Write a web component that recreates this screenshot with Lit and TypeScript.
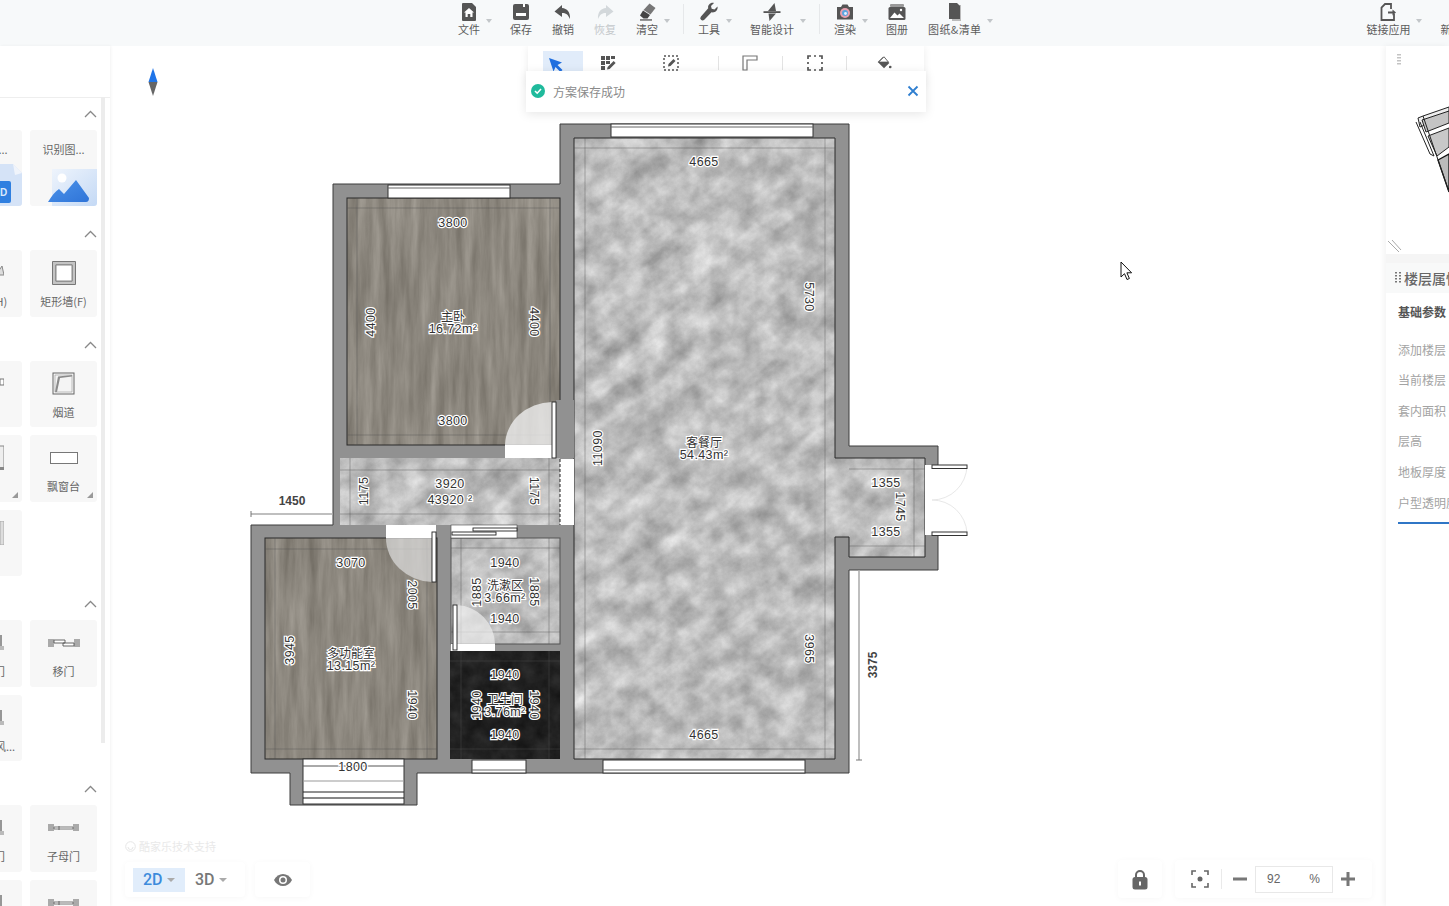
import { LitElement, html, css, svg } from "lit";
import { customElement } from "lit/decorators.js";

const I = {
  file: svg`<path d="M3 2a1 1 0 0 1 1-1h9l4 4v13a1 1 0 0 1-1 1H4a1 1 0 0 1-1-1z" fill="#555"/><path d="M10 6l5 4.500h-1.500V15h-2.200v-3H8.700v3H6.500v-4.500H5z" fill="#fff"/>`,
  save: svg`<rect x="2" y="2" width="16" height="16" rx="2" fill="#555"/><rect x="5" y="11" width="10" height="3" fill="#fff"/><rect x="12" y="2" width="2" height="3" fill="#fff"/>`,
  undo: svg`<path d="M9 3L1.500 9.500 9 15v-4c4 0 6 1.500 8 6 .5-7-3-10.500-8-11z" fill="#555"/>`,
  redo: svg`<path d="M11 3l7.500 6.500L11 15v-4c-4 0-6 1.500-8 6-.5-7 3-10.500 8-11z" fill="#d3d8db"/>`,
  clear: svg`<path d="M12.500 1.500l6 4.500-5 6.500-7-4.500z" fill="#777"/><path d="M6 8.500l7 4.500-2.500 3.500H6.500L3 13.500z" fill="#444"/><rect x="3" y="17.300" width="12" height="1.300" fill="#555"/>`,
  tool: svg`<path d="M18.500 4.500l-3 3-2.800-.7-.7-2.800 3-3c-3.500-.8-6.500 2-5.800 5.300L2 14.500a2.300 2.300 0 0 0 3.300 3.300l7.200-7.500c3.500.8 6.800-2.300 6-5.800z" fill="#555"/>`,
  ai: svg`<path d="M12.500 1L6 9h8zM7.500 19L14 11.500H6.500z" fill="#555"/><rect x="1.500" y="9.200" width="17" height="1.800" fill="#555"/>`,
  render: svg`<path d="M2 5h4l1.500-2.500h5L14 5h4v12.500H2z" fill="#555"/><circle cx="10" cy="11" r="5" fill="#e8a0b0"/><circle cx="10" cy="11" r="3" fill="#5ba5e0"/><circle cx="10.500" cy="11.500" r="1.400" fill="#e8efff"/>`,
  album: svg`<rect x="3" y="2" width="14" height="3" rx="1" fill="#999"/><rect x="1.500" y="5" width="17" height="13" rx="1.500" fill="#555"/><path d="M3 16l4.500-5.500 3 3 2-2L17 16z" fill="#fff"/><circle cx="14" cy="8" r="1.200" fill="#fff"/>`,
  docs: svg`<path d="M7 3h9v16H7z" fill="#bbb"/><path d="M4 1h8l3 3v13H4z" fill="#555"/>`,
  link: svg`<path d="M13 7V2H7L3.500 5.500V18H16v-6" fill="none" stroke="#555" stroke-width="1.800"/><path d="M10 9.500h4.500V7.500l3.500 3-3.500 3v-2H10z" fill="#555"/>`,
};

const topItems = [
  { t: "文件", i: I.file, a: 1 }, { t: "保存", i: I.save }, { t: "撤销", i: I.undo }, { t: "恢复", i: I.redo, off: 1 },
  { t: "清空", i: I.clear, a: 1 }, { d: 1 }, { t: "工具", i: I.tool, a: 1 }, { t: "智能设计", i: I.ai, a: 1 }, { d: 1 },
  { t: "渲染", i: I.render, a: 1 }, { t: "图册", i: I.album }, { t: "图纸&清单", i: I.docs, a: 1 },
];

const wall = svg`<path d="M.5.5h23v23H.5zM4 4v16h16V4z" fill="#c4c4c4" fill-rule="evenodd" stroke="#777"/><rect x="4" y="4" width="16" height="16" fill="#fff" stroke="#888"/>`;
const flue = svg`<rect x="1" y="1" width="21" height="21" fill="#f4f4f4" stroke="#666"/><path d="M3 20L6 4.500 20 3v1.500L8 6 5 20z" fill="#8a8a8a"/><path d="M3 3h17v17H3z" fill="none" stroke="#999" stroke-width=".6"/>`;
const bay = svg`<rect x="0.500" y="0.500" width="27" height="11" fill="#fff" stroke="#777"/>`;
const slide = svg`<rect x="0" y="0" width="6" height="8" fill="#aaa"/><rect x="26" y="0" width="6" height="8" fill="#aaa"/><path d="M6 1h11v3H6zM15 4h11v3H15z" fill="#fff" stroke="#555" stroke-width=".9"/>`;
const motherDoor = svg`<rect x="0" y="0" width="6" height="7" fill="#aaa"/><rect x="25" y="0" width="6" height="7" fill="#aaa"/><path d="M6 3h19v2H6z" fill="#fff" stroke="#666" stroke-width=".9"/><path d="M11 2v4" stroke="#666"/>`;
const cutA = svg`<path d="M22 14l6-9 2 9z" fill="#ddd" stroke="#888"/>`;
const cutB = svg`<rect x="26" y="7" width="4" height="6" fill="#fff" stroke="#777"/>`;
const cutC = svg`<rect x="24" y="1" width="6" height="22" fill="#eee" stroke="#888"/><rect x="26" y="22" width="4" height="3" fill="#888"/>`;
const cutD = svg`<rect x="26" y="0" width="4" height="24" fill="#ddd" stroke="#aaa"/>`;
const cutE = svg`<path d="M27 4v14h5" fill="none" stroke="#777" stroke-width="1.500"/><rect x="26" y="15" width="6" height="4" fill="#bbb"/>`;

type Card = { t?: string; ic?: any; w?: number; h?: number; c?: number };
const sections: { cls?: string; cards: Card[] }[] = [
  { cls: "top", cards: [{ t: "识别C..." }, { t: "识别图..." }] },
  { cards: [{ t: "直墙(H)", ic: cutA, w: 30, h: 24 }, { t: "矩形墙(F)", ic: wall, w: 24, h: 24 }] },
  { cards: [
    { t: "柱子", ic: cutB, w: 30, h: 24 }, { t: "烟道", ic: flue, w: 23, h: 23 },
    { t: "梁", ic: cutC, c: 1, w: 30, h: 26 }, { t: "飘窗台", ic: bay, w: 28, h: 12, c: 1 },
    { t: "地台", ic: cutD, w: 30, h: 24 },
  ] },
  { cards: [
    { t: "单开门", ic: cutE, w: 30, h: 24 }, { t: "移门", ic: slide, w: 32, h: 8 },
    { t: "排烟通风...", ic: cutE, w: 30, h: 24 },
  ] },
  { cards: [
    { t: "双开门", ic: cutE, w: 30, h: 24 }, { t: "子母门", ic: motherDoor, w: 31, h: 8 },
    { t: "门洞", ic: cutE, w: 30, h: 24 }, { t: "推拉门", ic: motherDoor, w: 31, h: 8 },
  ] },
];

type D = [string, number, number, number?];
const dims: D[] = [
  ["4665", 704, 162], ["5730", 809, 297, 90], ["11090", 598, 448, -90], ["3965", 809, 649, 90], ["4665", 704, 735],
  ["3800", 453, 223], ["3800", 453, 421], ["4400", 371, 322, -90], ["4400", 534, 322, 90],
  ["1175", 364, 491, -90], ["1175", 534, 491, 90], ["3920", 450, 484], ["43920 ²", 450, 500],
  ["3070", 351, 563], ["2005", 412, 595, 90], ["3945", 290, 650, -90], ["1940", 412, 705, 90],
  ["1940", 505, 563], ["1885", 477, 592, -90], ["1885", 534, 592, 90], ["1940", 505, 619],
  ["1940", 505, 675], ["1940", 477, 705, -90], ["1940", 534, 705, 90], ["1940", 505, 735],
  ["1800", 353, 767], ["1355", 886, 483], ["1745", 900, 507, 90], ["1355", 886, 532],
  ["54.43m²", 704, 455], ["16.72m²", 453, 329], ["13.15m²", 351, 666], ["3.66m²", 505, 598], ["3.76m²", 505, 712],
];
const labels: [string, number, number][] = [
  ["客餐厅", 704, 441], ["主卧", 453, 315], ["多功能室", 351, 652], ["洗漱区", 505, 584], ["卫生间", 505, 698],
];
const lines: number[][] = [
  [574, 148, 835, 148], [574, 749, 835, 749], [585, 138, 585, 759], [825, 138, 825, 759],
  [357, 198, 357, 445], [550, 198, 550, 445], [347, 208, 560, 208], [347, 435, 560, 435],
  [340, 470, 560, 470], [340, 514, 560, 514], [350, 458, 350, 525], [549, 458, 549, 525],
  [265, 549, 437, 549], [275, 538, 275, 759], [427, 538, 427, 759], [265, 749, 437, 749],
  [451, 548, 560, 548], [451, 632, 560, 632], [461, 538, 461, 644], [549, 538, 549, 644],
  [450, 661, 560, 661], [450, 749, 560, 749], [461, 651, 461, 759], [549, 651, 549, 759],
  [849, 469, 925, 469], [849, 546, 925, 546], [914, 458, 914, 557],
];

@customElement("app-root")
export class AppRoot extends LitElement {
  static styles = css`
    :host { display: block; width: 1449px; height: 906px; overflow: hidden; background: #fff; color: #666;
      font-family: "Noto Sans CJK SC", "Liberation Sans", sans-serif; font-size: 11px; }
    .page { display: flex; flex-direction: column; height: 906px; }
    .topbar { flex: none; height: 46px; display: flex; padding-left: 458px; background: #f7f9fa; overflow: hidden; }
    .tb { flex: none; position: relative; display: flex; flex-direction: column; align-items: center; padding-top: 2px; margin-right: 20px; line-height: 14px; color: #5c5c5c; }
    .tb svg { display: block; width: 20px; height: 20px; }
    .tb.off { color: #c4c8cb; }
    .tb.a { margin-right: 30px; }
    .tb.a::after { content: ""; position: absolute; right: -12px; top: 19px; border: 3px solid transparent; border-top: 4px solid #c2c6c9; }
    .tdiv { flex: none; width: 1px; height: 30px; margin: 4px 14px 0 -5px; background: #e6e8ea; }
    .tb.wide { letter-spacing: .4px; }
    .tb.far { margin-left: 355px; }
    .body { flex: 1; display: flex; min-height: 0; }
    .left { flex: none; width: 110px; background: #fff; box-shadow: 1px 0 3px rgba(0, 0, 0, .05); position: relative; overflow: hidden; z-index: 2; }
    .lhead { height: 51px; border-bottom: 1px solid #eee; }
    .sb { position: absolute; left: 101px; top: 51px; width: 4px; height: 646px; background: #ececec; }
    .sec { margin-bottom: 12px; margin-left: -45px; width: 142px; }
    .sh { height: 32px; display: flex; align-items: center; justify-content: flex-end; }
    .sh svg { width: 13px; height: 8px; display: block; }
    .grid { display: grid; grid-template-columns: 67px 67px; gap: 8px; }
    .card { height: 66.500px; background: #f7f7f7; border-radius: 3px; position: relative; display: flex; flex-direction: column; align-items: center; overflow: hidden; }
    .slot { height: 30px; margin-top: 8px; display: flex; align-items: center; justify-content: center; }
    .slot svg { display: block; }
    .cl { margin-top: 6px; line-height: 14px; white-space: nowrap; color: #666; }
    .card.c::after { content: ""; position: absolute; right: 4px; bottom: 4px; border-style: solid; border-width: 0 0 6px 6px; border-color: transparent transparent #999 transparent; }
    .top .card { height: 76px; }
    .top .cl { margin-top: 12px; }
    .top .pic { margin-top: auto; align-self: flex-end; display: block; }
    .cad { font: bold 10px "Liberation Sans", sans-serif; fill: #dbe9fb; }
    .canvas { flex: 1; position: relative; min-width: 0; overflow: hidden; background: #fff; }
    .plan { position: absolute; left: 0; top: 0; width: 1276px; height: 860px; display: block; }
    .d { font: 12.500px "Liberation Sans", sans-serif; letter-spacing: .4px; fill: #333; stroke: #fff; stroke-width: 2.400px; paint-order: stroke; text-anchor: middle; dominant-baseline: central; }
    .lb { font: 12px "Noto Sans CJK SC", sans-serif; fill: #333; stroke: #fff; stroke-width: 2.200px; paint-order: stroke; text-anchor: middle; dominant-baseline: central; }
    .ext { font: bold 12px "Liberation Sans", sans-serif; fill: #444; text-anchor: middle; dominant-baseline: central; }
    .tools { position: absolute; left: 418px; top: 0; width: 396px; height: 40px; background: #fff; box-shadow: 0 1px 8px rgba(0, 0, 0, .08); display: flex; }
    .tool { flex: none; box-sizing: border-box; height: 25px; display: flex; justify-content: center; padding-top: 9px; position: relative; }
    .tool svg { width: 16px; height: 16px; display: block; }
    .tool.s1 { width: 40px; height: 20px; margin: 5px 0 0 15px; padding: 6px 14px 0 0; background: #e1ecfa; }
    .tool.w0 { width: 50px; }
    .tool.w1 { width: 85px; padding-right: 9px; }
    .tool.w2 { width: 63px; padding-right: 2px; }
    .tool.w3 { width: 63px; }
    .tool.w4 { width: 74px; }
    .vd { flex: none; width: 1px; height: 14px; margin-top: 10px; background: #e3e3e3; }
    .toast { position: absolute; left: 416px; top: 25px; width: 400px; height: 41px; box-sizing: border-box; background: #fff; box-shadow: 0 2px 10px rgba(0, 0, 0, .1); display: flex; align-items: center; padding: 0 7px 1px 5px; font-size: 12px; color: #8a8a8a; }
    .toast .ok { width: 14px; height: 14px; margin-right: 8px; display: block; }
    .toast .x { width: 12px; height: 12px; margin-left: auto; display: block; }
    .support { position: absolute; left: 15px; top: 793px; display: flex; align-items: center; gap: 3px; color: #e9e9e9; line-height: 14px; }
    .support svg { width: 11px; height: 11px; display: block; }
    .float { position: absolute; background: #fff; box-shadow: 0 1px 6px rgba(0, 0, 0, .035); border-radius: 4px; display: flex; align-items: center; }
    .views { left: 15px; top: 816px; width: 120px; height: 35px; padding-left: 8px; box-sizing: border-box; }
    .vb { display: flex; align-items: center; gap: 4px; height: 24px; width: 52px; box-sizing: border-box; padding-left: 10px; font: 500 16px Roboto, "Liberation Sans", sans-serif; color: #777; }
    .vb.on { background: #e1edfb; color: #3d8bdc; }
    .vb i { display: block; border: 4px solid transparent; border-top: 4px solid #aaa; border-bottom: 0; }
    .eyeg { left: 145px; top: 816px; width: 55px; height: 35px; justify-content: center; }
    .eyeg svg { width: 20px; height: 14px; display: block; }
    .lock { left: 1008px; top: 814px; width: 44px; height: 38px; justify-content: center; }
    .lock svg { width: 16px; height: 21px; display: block; }
    .zoomg { left: 1065px; top: 814px; width: 197px; height: 38px; padding-left: 16px; box-sizing: border-box; }
    .zoomg svg { display: block; }
    .zd { width: 1px; height: 20px; background: #eaeaea; margin: 0 10px 0 12px; }
    .zin { width: 78px; height: 27px; box-sizing: border-box; border: 1px solid #e8e8e8; margin: 0 7px; display: flex; justify-content: space-between; align-items: center; padding: 0 12px 0 11px; font-size: 12px; color: #666; background: #fff; font-family: "Liberation Sans", sans-serif; }
    .right { flex: none; width: 63px; display: flex; flex-direction: column; background: #fbfbfb; box-shadow: -2px 0 6px rgba(0, 0, 0, .05); overflow: hidden; position: relative; z-index: 2; white-space: nowrap; }
    .mini { height: 208px; flex: none; background: #fff; position: relative; }
    .mini svg { width: 63px; height: 208px; display: block; }
    .rgap { height: 9px; flex: none; background: #f5f5f5; }
    .rhead { height: 30px; flex: none; background: #f8f9f9; display: flex; align-items: center; gap: 3px; padding-left: 9px; font-size: 14px; color: #666; font-weight: 500; }
    .rhead svg { flex: none; width: 6px; height: 14px; display: block; }
    .rbody { flex: 1; background: #fff; padding: 10px 0 0 12px; }
    .rt { font-size: 12px; font-weight: 700; line-height: 18px; color: #555; margin-bottom: 13.700px; }
    .ri { font-size: 12px; line-height: 30.600px; color: #a3a3a3; }
    .rbar { height: 2px; background: #2f76c6; margin-top: 4px; }
  `;

  private chevron() {
    return html`<svg viewBox="0 0 13 8"><path d="M1 7l5.500-5.500L12 7" fill="none" stroke="#888" stroke-width="1.300"/></svg>`;
  }

  private card(c: Card, sectionTop: boolean, i: number) {
    if (sectionTop) {
      return html`<div class="card"><div class="cl">${c.t}</div>${i === 0
        ? html`<svg class="pic" width="34" height="42" viewBox="0 0 34 42"><path d="M0 0h25l9 9v33H0z" fill="#d5e3f7"/><path d="M25 0l9 9-7 2z" fill="#f0f4fb"/><rect x="-2" y="17" width="25" height="22" rx="2" fill="#2f7fe0"/><text class="cad" x="12" y="32">D</text></svg>`
        : html`<svg class="pic" width="49" height="38" viewBox="0 0 49 38"><defs><linearGradient id="sky" x1="0" y1="0" x2="1" y2="1"><stop offset="0" stop-color="#eef4fc"/><stop offset="1" stop-color="#c4d9f5"/></linearGradient><linearGradient id="mt" x1="0" y1="0" x2="1" y2="1"><stop offset="0" stop-color="#4d94ea"/><stop offset="1" stop-color="#2f74d8"/></linearGradient></defs><rect x="4" y="1" width="45" height="37" fill="url(#sky)"/><circle cx="14" cy="10" r="4.500" fill="#fff"/><path d="M0 34Q6 24 11 21l5 5 12-14 13 18q0 4-3 4z" fill="url(#mt)"/></svg>`}</div>`;
    }
    return html`<div class="card ${c.c ? "c" : ""}"><div class="slot">
      <svg width="${c.w}" height="${c.h}" viewBox="0 0 ${c.w} ${c.h}">${c.ic}</svg></div>
      <div class="cl">${c.t}</div></div>`;
  }

  private plan() {
    return html`<svg class="plan" viewBox="110 46 1276 860">
      <defs>
        <filter id="marble" x="0" y="0" width="100%" height="100%" color-interpolation-filters="sRGB">
          <feTurbulence type="fractalNoise" baseFrequency="0.045" numOctaves="7" seed="11"/>
          <feColorMatrix values="0.520 0 0 0 0.480  0.520 0 0 0 0.480  0.520 0 0 0 0.480  0 0 0 0 1"/>
        </filter>
        <filter id="streak" x="0" y="0" width="100%" height="100%" color-interpolation-filters="sRGB">
          <feTurbulence type="fractalNoise" baseFrequency="0.008 0.05" numOctaves="5" seed="21"/>
          <feColorMatrix values="0.600 0 0 0 0.440  0.600 0 0 0 0.440  0.600 0 0 0 0.440  0 0 0 0 1"/>
        </filter>
        <filter id="wood" x="0" y="0" width="100%" height="100%" color-interpolation-filters="sRGB">
          <feTurbulence type="fractalNoise" baseFrequency="0.11 0.012" numOctaves="5" seed="5"/>
          <feColorMatrix values="0.220 0 0 0 0.440  0.220 0 0 0 0.420  0.220 0 0 0 0.385  0 0 0 0 1"/>
        </filter>
        <filter id="dark" x="0" y="0" width="100%" height="100%" color-interpolation-filters="sRGB">
          <feTurbulence type="fractalNoise" baseFrequency="0.06" numOctaves="5" seed="3"/>
          <feColorMatrix values="0.140 0 0 0 0.060  0.140 0 0 0 0.060  0.140 0 0 0 0.060  0 0 0 0 1"/>
        </filter>
        <clipPath id="marbleClip">
          <path d="M574 138H835V458H925V557H849V537H835V759H574Z"/>
          <rect x="340" y="458" width="220" height="67"/>
          <rect x="451" y="538" width="109" height="106"/>
        </clipPath>
        <clipPath id="woodClip">
          <rect x="347" y="198" width="213" height="247"/>
          <rect x="265" y="538" width="172" height="221"/>
        </clipPath>
      </defs>

      <path d="M560 124H849V446H938V570H849V773H417V805H290V773H251V525H333V184H560Z" fill="#919191" stroke="#3c3c3c"/>
      <g clip-path="url(#marbleClip)">
        <rect x="340" y="130" width="590" height="640" filter="url(#marble)"/>
        <rect x="-100" y="-100" width="1400" height="1400" filter="url(#streak)" opacity=".35" transform="rotate(-38 630 450)"/>
      </g>
      <g clip-path="url(#woodClip)"><rect x="260" y="190" width="305" height="575" filter="url(#wood)"/></g>
      <rect x="450" y="651" width="110" height="108" filter="url(#dark)"/>

      <path d="M574 138H835V458H925V557H849V537H835V759H574Z" fill="none" stroke="#2a2a2a"/>
      <rect x="347" y="198" width="213" height="247" fill="none" stroke="#2a2a2a"/>
      <rect x="265" y="538" width="172" height="221" fill="none" stroke="#2a2a2a"/>
      <rect x="451" y="538" width="109" height="106" fill="none" stroke="#555"/>

      ${lines.map((l) => svg`<line x1=${l[0]} y1=${l[1]} x2=${l[2]} y2=${l[3]} stroke="rgba(80,80,80,.4)"/>`)}

      <rect x="556" y="400" width="18" height="58" fill="#919191"/>
      <path d="M505 445A48 44 0 0 1 552 402V445Z" fill="rgba(238,238,238,.8)"/>
      <rect x="505" y="445" width="48" height="13" fill="#fff"/>
      <rect x="552" y="402" width="4" height="56" fill="#fff" stroke="#222" stroke-width=".9"/>

      <rect x="560" y="459" width="14" height="66" fill="#fff"/>
      <line x1="560" y1="459" x2="560" y2="525" stroke="#222" stroke-dasharray="3 2"/>

      <path d="M386 538A48 44 0 0 0 432 582V538Z" fill="rgba(222,222,222,.7)"/>
      <rect x="386" y="525" width="50" height="13" fill="#fff"/>
      <rect x="432" y="532" width="4" height="50" fill="#fff" stroke="#222" stroke-width=".9"/>

      <rect x="451" y="525" width="66" height="13" fill="#fff" stroke="#444" stroke-width=".6"/>
      <rect x="473" y="528" width="44" height="3" fill="#fff" stroke="#222" stroke-width=".9"/>
      <rect x="452" y="532" width="44" height="3" fill="#fff" stroke="#222" stroke-width=".9"/>

      <path d="M495 644A40 40 0 0 0 457 605V644Z" fill="rgba(238,238,238,.7)"/>
      <rect x="451" y="644" width="44" height="7" fill="#fff"/>
      <rect x="453" y="605" width="4" height="45" fill="#fff" stroke="#222" stroke-width=".9"/>

      <rect x="611" y="124" width="202" height="13" fill="#fff" stroke="#333"/>
      <line x1="611" y1="127" x2="813" y2="127" stroke="#666"/>
      <rect x="388" y="185" width="122" height="13" fill="#fff" stroke="#333"/>
      <line x1="388" y1="188" x2="510" y2="188" stroke="#666"/>
      <rect x="603" y="760" width="202" height="13" fill="#fff" stroke="#333"/>
      <line x1="603" y1="770" x2="805" y2="770" stroke="#666"/>
      <rect x="472" y="760" width="54" height="13" fill="#fff" stroke="#333"/>
      <line x1="472" y1="770" x2="526" y2="770" stroke="#666"/>

      <rect x="303" y="759" width="101" height="45" fill="#fff" stroke="#333"/>
      <line x1="303" y1="766" x2="404" y2="766" stroke="#555"/>
      <line x1="303" y1="781" x2="404" y2="781" stroke="#999"/>
      <line x1="303" y1="792" x2="404" y2="792" stroke="#222"/>
      <line x1="303" y1="798" x2="404" y2="798" stroke="#111"/>

      <rect x="925" y="465" width="14" height="70" fill="#fff"/>
      <path d="M967 466A35 35 0 0 1 932 500A35 35 0 0 1 967 533" fill="none" stroke="#e8e8e8"/>
      <rect x="932" y="465" width="35" height="3.500" fill="#fff" stroke="#333"/>
      <rect x="932" y="532" width="35" height="3.500" fill="#fff" stroke="#333"/>

      <line x1="251" y1="514" x2="333" y2="514" stroke="#aaa" stroke-width="1.500"/>
      <path d="M251 511v6" stroke="#777"/>
      <line x1="859" y1="570" x2="859" y2="760" stroke="#aaa" stroke-width="1.500"/>
      <path d="M856 760h6" stroke="#777"/>
      <text class="ext" x="292" y="501">1450</text>
      <text class="ext" x="873" y="665" transform="rotate(-90 873 665)">3375</text>

      ${dims.map(([t, x, y, r]) => svg`<text class="d" x=${x} y=${y} transform=${r ? `rotate(${r} ${x} ${y})` : ""}>${t}</text>`)}
      ${labels.map(([t, x, y]) => svg`<text class="lb" x=${x} y=${y}>${t}</text>`)}

      <path d="M153 68l4.500 14h-9z" fill="#1f74e8"/>
      <path d="M148.500 82h9L153 96z" fill="#666"/>

      <path d="M1121 262v15l3.500-3.300 2.500 5.800 2.400-1-2.500-5.700h4.700z" fill="#fff" stroke="#111"/>
    </svg>`;
  }

  render() {
    return html`<div class="page">
      <div class="topbar">
        ${topItems.map((it) =>
          it.d
            ? html`<div class="tdiv"></div>`
            : html`<div class="tb ${it.a ? "a" : ""} ${it.off ? "off" : ""} ${it.t === "图纸&清单" ? "wide" : ""}"><svg viewBox="0 0 20 20">${it.i}</svg>${it.t}</div>`
        )}
        <div class="tb a far"><svg viewBox="0 0 20 20">${I.link}</svg>链接应用</div>
        <div class="tb"><svg viewBox="0 0 20 20">${I.file}</svg>新手帮助</div>
      </div>

      <div class="body">
        <aside class="left">
          <div class="lhead"></div>
          <div class="sb"></div>
          ${sections.map((s) => html`<div class="sec ${s.cls ?? ""}">
            <div class="sh">${this.chevron()}</div>
            <div class="grid">${s.cards.map((c, i) => this.card(c, s.cls === "top", i))}</div>
          </div>`)}
        </aside>

        <main class="canvas">
          ${this.plan()}
          <div class="tools">
            <div class="tool s1"><svg viewBox="0 0 16 16"><path d="M1 1l13 4.500-4.500 2.500 5 5-2 2-5-5-2 4.500z" fill="#1f6fe0"/></svg></div>
            <div class="tool w0"><svg viewBox="0 0 16 16"><path d="M1 1h4v4H1zM6 1h4v4H6zM11 1h4v3h-4zM1 6h4v4H1zM6 6h4v3H6zM1 11h4v4H1z" fill="#555"/><path d="M7 14.500l.6-2.500 6-6 2 2-6 6z" fill="#555"/></svg></div>
            <div class="tool w1"><svg viewBox="0 0 16 16"><rect x="1" y="1" width="14" height="14" fill="none" stroke="#555" stroke-width="1.500" stroke-dasharray="2 2"/><path d="M5 11.500l.5-2.500 5-5 2 2-5 5z" fill="#555"/></svg></div>
            <div class="vd"></div>
            <div class="tool w2"><svg viewBox="0 0 16 16"><path d="M1 15V1h14v4H5v10z" fill="#fff" stroke="#777" stroke-width="1.200"/></svg></div>
            <div class="vd"></div>
            <div class="tool w3"><svg viewBox="0 0 16 16"><path d="M1 4V1h3M7 1h2M12 1h3v3M15 7v2M15 12v3h-3M9 15H7M4 15H1v-3M1 9V7" fill="none" stroke="#555" stroke-width="1.700"/></svg></div>
            <div class="vd"></div>
            <div class="tool w4"><svg viewBox="0 0 18 16"><path d="M8 1l7 7-6 6-7-7z" fill="#555"/><path d="M3 7h11l-5-6z" fill="#fff" stroke="#555"/><circle cx="16" cy="12.500" r="1.500" fill="#555"/></svg></div>
          </div>
          <div class="toast">
            <svg class="ok" viewBox="0 0 14 14"><circle cx="7" cy="7" r="7" fill="#1fba9c"/><path d="M4 7l2.200 2.200L10 5" fill="none" stroke="#fff" stroke-width="1.600"/></svg>
            方案保存成功
            <svg class="x" viewBox="0 0 12 12"><path d="M1.500 1.500l9 9M10.500 1.500l-9 9" stroke="#2f7fd0" stroke-width="1.800"/></svg>
          </div>

          <div class="support"><svg viewBox="0 0 11 11"><circle cx="5.500" cy="5.500" r="4.800" fill="none" stroke="#e6e6e6"/><path d="M3 6a2.500 2.500 0 0 0 5 0" fill="none" stroke="#e6e6e6"/></svg>酷家乐技术支持</div>
          <div class="float views">
            <div class="vb on">2D<i></i></div>
            <div class="vb">3D<i></i></div>
          </div>
          <div class="float eyeg"><svg viewBox="0 0 20 14"><path d="M1 7c2-4 5.500-6 9-6s7 2 9 6c-2 4-5.500 6-9 6S3 11 1 7z" fill="#777"/><circle cx="10" cy="7" r="4" fill="#fff"/><circle cx="10" cy="7" r="2.500" fill="#777"/></svg></div>
          <div class="float lock"><svg viewBox="0 0 16 21"><path d="M4 9V6a4 4 0 0 1 8 0v3" fill="none" stroke="#666" stroke-width="2"/><rect x="0.500" y="8" width="15" height="12.500" rx="2.500" fill="#666"/><rect x="7" y="12.500" width="2" height="4" fill="#fff"/></svg></div>
          <div class="float zoomg">
            <svg width="18" height="18" viewBox="0 0 18 18"><path d="M1 5V1h4M13 1h4v4M17 13v4h-4M5 17H1v-4" fill="none" stroke="#666" stroke-width="1.600"/><circle cx="9" cy="9" r="2.500" fill="#666"/></svg>
            <div class="zd"></div>
            <svg width="16" height="16" viewBox="0 0 16 16"><rect x="1" y="6.500" width="14" height="3" fill="#777"/></svg>
            <div class="zin"><span>92</span><span>%</span></div>
            <svg width="16" height="16" viewBox="0 0 16 16"><path d="M1 6.500h5.500V1h3v5.500H15v3H9.500V15h-3V9.500H1z" fill="#777"/></svg>
          </div>
        </main>

        <aside class="right">
          <div class="mini"><svg viewBox="1386 46 63 208">
            <path d="M1398 54v12M1400 54v12" stroke="#888" stroke-dasharray="1.500 1.500" fill="none"/>
            <path d="M1418 118l5-2 26-9v8l-29 12z" fill="#eee" stroke="#222"/>
            <path d="M1422 120l27-9v12l-23 9z" fill="#c4c4c4" stroke="#222"/>
            <path d="M1428 136l21-8v19l-12 9z" fill="#c8c8c8" stroke="#222"/>
            <path d="M1438 160l11-6v38z" fill="#bbb" stroke="#111" stroke-width="1.300"/>
            <path d="M1416 122l14 32 4 2-14-34M1423 116l26 76" fill="none" stroke="#222"/>
            <path d="M1388 241l11 11M1392 240l9 10" stroke="#aaa"/>
          </svg></div>
          <div class="rgap"></div>
          <div class="rhead"><svg viewBox="0 0 6 14"><path d="M1 1v12M5 1v12" stroke="#777" stroke-width="2" stroke-dasharray="1.500 1.500"/></svg>楼层属性</div>
          <div class="rbody">
            <div class="rt">基础参数</div>
            ${["添加楼层", "当前楼层", "套内面积", "层高", "地板厚度", "户型透明度"].map((t) => html`<div class="ri">${t}</div>`)}
            <div class="rbar"></div>
          </div>
        </aside>
      </div>
    </div>`;
  }
}
